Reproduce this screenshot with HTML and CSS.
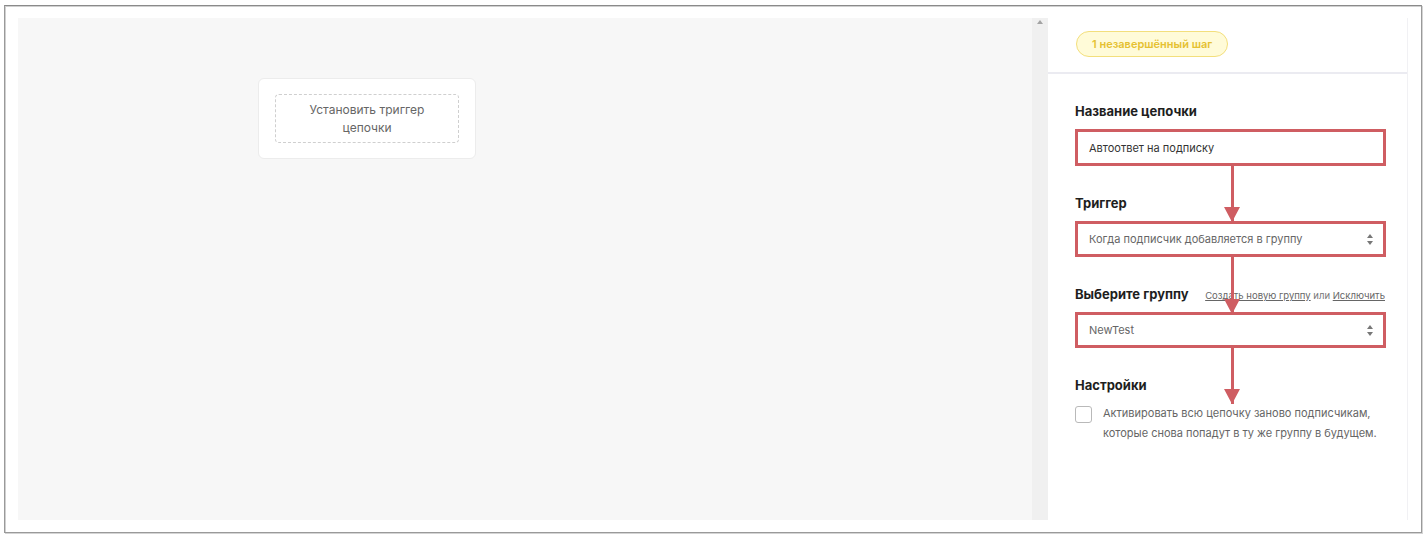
FILE: index.html
```html
<!DOCTYPE html>
<html lang="ru">
<head>
<meta charset="utf-8">
<title>Цепочка</title>
<link rel="stylesheet" href="styles.css">
</head>
<body>
<div class="frame">
  <div class="workspace">
    <div class="canvas">
      <div class="node">
        <div class="node-drop">Установить триггер<br>цепочки</div>
      </div>
    </div>
    <div class="scrollbar"><span class="scroll-up"></span></div>
    <aside class="panel">
      <div class="panel-head">
        <span class="badge">1 незавершённый шаг</span>
      </div>
      <div class="panel-body">
        <div class="field">
          <div class="label">Название цепочки</div>
          <div class="input hl">Автоответ на подписку</div>
        </div>
        <div class="field">
          <div class="label">Триггер</div>
          <div class="input select hl">Когда подписчик добавляется в группу<span class="updown"></span></div>
        </div>
        <div class="field">
          <div class="label-row">
            <span class="label">Выберите группу</span>
            <span class="links"><a>Создать новую группу</a> или <a>Исключить</a></span>
          </div>
          <div class="input select hl">NewTest<span class="updown"></span></div>
        </div>
        <div class="field settings">
          <div class="label">Настройки</div>
          <label class="check">
            <span class="box"></span>
            <span class="check-text">Активировать всю цепочку заново подписчикам,<br>которые снова попадут в ту же группу в будущем.</span>
          </label>
        </div>
        <div class="arrow a1"></div>
        <div class="arrow a2"></div>
        <div class="arrow a3"></div>
      </div>
    </aside>
  </div>
</div>
</body>
</html>
```

FILE: styles.css
```css
* { box-sizing: border-box; }
html, body { margin: 0; padding: 0; background: #fff; }
body {
  font-family: Inter, "Noto Sans", "Liberation Sans", sans-serif;
  color: #222;
  width: 1427px;
  height: 540px;
  overflow: hidden;
}
.frame {
  margin: 5px 0 0 4px;
  width: 1418px;
  height: 528px;
  border: 1px solid #9a9a9a;
  border-top-color: #8a8a8a;
  box-shadow: inset 1px 1px 0 #d0d0d0, 1px 1px 0 #d4d4d4;
  padding: 12px 12px 12px 13px;
  background: #fff;
}
.workspace {
  display: flex;
  height: 502px;
}
.canvas {
  width: 1014px;
  background: #f7f7f7;
  padding: 60px 0 0 240px;
}
.node {
  width: 218px;
  height: 81px;
  background: #fff;
  border: 1px solid #ececec;
  border-radius: 6px;
  padding: 15px 16px;
}
.node-drop {
  height: 49px;
  border: 1px dashed #cfcfcf;
  border-radius: 4px;
  display: flex;
  align-items: center;
  justify-content: center;
  text-align: center;
  font-size: 12px;
  line-height: 18px;
  color: #666;
}
.scrollbar {
  width: 16px;
  background: #f0f0f0;
  position: relative;
}
.scroll-up {
  position: absolute;
  left: 5px;
  top: 2px;
  width: 0; height: 0;
  border-left: 3px solid transparent;
  border-right: 3px solid transparent;
  border-bottom: 4px solid #a3a3a3;
}
.panel {
  width: 360px;
  border-right: 1px solid #f1f1f4;
  display: flex;
  flex-direction: column;
}
.panel-head {
  height: 56px;
  border-bottom: 2px solid #ebebf1;
  padding: 13px 0 0 28px;
}
.badge {
  display: inline-block;
  height: 26px;
  line-height: 24px;
  padding: 0 15px;
  border: 1px solid #f3df7c;
  background: #fffbd8;
  border-radius: 13px;
  font-size: 11px;
  font-weight: 600;
  color: #e5c132;
}
.panel-body {
  position: relative;
  padding: 28px 21px 0 27px;
}
.field { margin-bottom: 28px; }
.label {
  font-size: 13px;
  font-weight: 700;
  color: #1e1e1e;
  line-height: 18px;
  margin-bottom: 9px;
}
.label-row {
  display: flex;
  justify-content: space-between;
  align-items: baseline;
  margin-bottom: 9px;
}
.label-row .label { margin-bottom: 0; }
.links {
  font-size: 9.5px;
  color: #777;
  white-space: nowrap;
  padding-right: 1px;
}
.links a {
  color: #666;
  text-decoration: underline;
}
.input {
  position: relative;
  height: 37px;
  display: flex;
  align-items: center;
  padding: 0 11px;
  font-size: 11px;
  color: #333;
  background: #fff;
}
.select { color: #666; height: 36px; }
.hl { border: 3px solid #cf5d62; }
.updown {
  position: absolute;
  right: 9px;
  top: 50%;
  width: 7px;
  height: 11px;
  margin-top: -5px;
}
.updown::before, .updown::after {
  content: "";
  position: absolute;
  left: 0;
  border-left: 3.5px solid transparent;
  border-right: 3.5px solid transparent;
}
.updown::before { top: 0; border-bottom: 4px solid #777; }
.updown::after { bottom: 0; border-top: 4px solid #777; }
.settings { margin-bottom: 0; }
.settings .label { margin-bottom: 11px; }
.check {
  display: flex;
  align-items: flex-start;
  gap: 11px;
}
.box {
  flex: none;
  width: 17px;
  height: 17px;
  border: 1px solid #b9b9b9;
  border-radius: 3px;
  margin-top: 1px;
}
.check-text {
  font-size: 11px;
  line-height: 20px;
  color: #666;
  margin-top: -2px;
  white-space: nowrap;
}
.arrow {
  position: absolute;
  left: 183px;
  width: 3px;
  background: #cf5d62;
}
.arrow::after {
  content: "";
  position: absolute;
  left: -7px;
  bottom: 0;
  border-left: 8.5px solid transparent;
  border-right: 8.5px solid transparent;
  border-top: 15px solid #cf5d62;
}
.a1 { top: 89px; height: 59px; }
.a2 { top: 182px; height: 58px; }
.a3 { top: 272px; height: 58px; }
```
